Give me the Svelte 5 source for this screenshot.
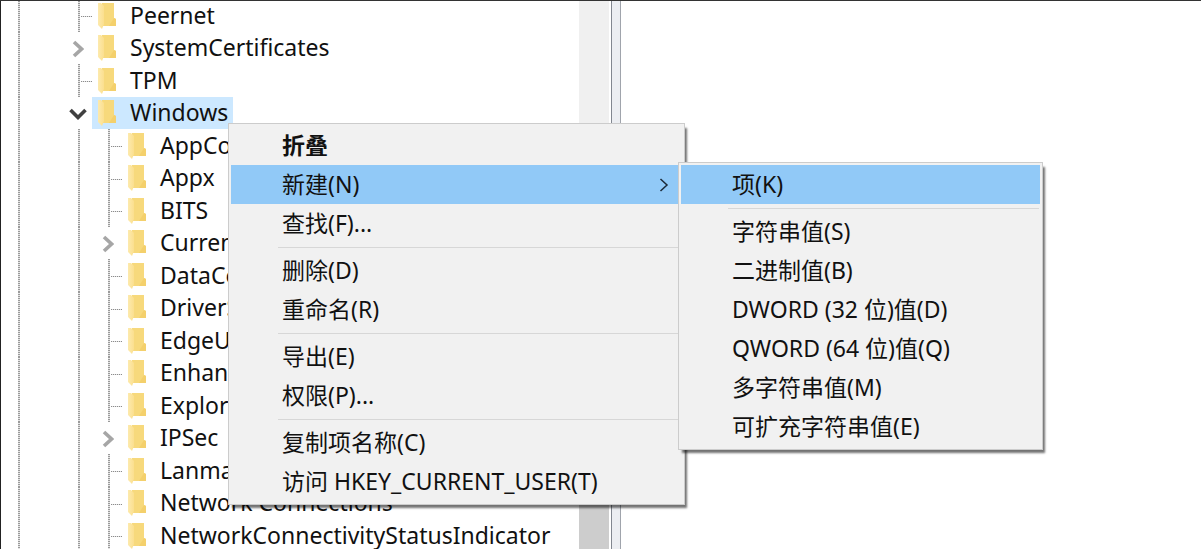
<script>
  const tree = [
    { name: 'Peernet', level: 1 },
    { name: 'SystemCertificates', level: 1, state: 'closed' },
    { name: 'TPM', level: 1 },
    { name: 'Windows', level: 1, state: 'open', selected: true },
    { name: 'AppCo', level: 2 },
    { name: 'Appx', level: 2 },
    { name: 'BITS', level: 2 },
    { name: 'Curren', level: 2, state: 'closed' },
    { name: 'DataCo', level: 2 },
    { name: 'DriverS', level: 2 },
    { name: 'EdgeU', level: 2 },
    { name: 'Enhan', level: 2 },
    { name: 'Explor', level: 2 },
    { name: 'IPSec', level: 2, state: 'closed' },
    { name: 'Lanma', level: 2 },
    { name: 'Network Connections', level: 2 },
    { name: 'NetworkConnectivityStatusIndicator', level: 2 },
  ];

  const submenu = [
    ['项(K)'],
    ['字符串值(S)', '二进制值(B)', 'DWORD (32 位)值(D)', 'QWORD (64 位)值(Q)', '多字符串值(M)', '可扩充字符串值(E)'],
  ];

  const menu = [
    [{ text: '折叠', bold: true }, { text: '新建(N)', children: submenu }, { text: '查找(F)...' }],
    [{ text: '删除(D)' }, { text: '重命名(R)' }],
    [{ text: '导出(E)' }, { text: '权限(P)...' }],
    [{ text: '复制项名称(C)' }, { text: '访问 HKEY_CURRENT_USER(T)' }],
  ];
</script>

<main class="editor">
  <section class="tree-pane">
    <ul class="tree">
      {#each tree as node}
        <li class="row">
          <span class="cell rail"></span>
          <span class="cell"></span>
          {#if node.level === 2}<span class="cell rail"></span>{/if}
          {#if node.state === 'closed'}
            <span class="cell">
              <svg width="12" height="18" viewBox="0 0 12 18"><path d="M2 2 L9.500 9 L2 16" fill="none" stroke="#a6a6a6" stroke-width="3.6" /></svg>
            </span>
          {:else if node.state === 'open'}
            <span class="cell">
              <svg width="18" height="12" viewBox="0 0 18 12"><path d="M1.500 2 L9 9.500 L16.500 2" fill="none" stroke="#404040" stroke-width="3.6" /></svg>
            </span>
          {:else}
            <span class="cell rail branch"></span>
          {/if}
          <button class="node" class:selected={node.selected}>
            <svg class="folder" width="20" height="28" viewBox="0 0 20 28">
              <defs>
                <linearGradient id="leaf" x1="0" y1="0" x2="1" y2="0">
                  <stop offset="0" stop-color="#fdeaae" />
                  <stop offset="1" stop-color="#fbdf8e" />
                </linearGradient>
              </defs>
              <path d="M5 2 H17 V17 L19 18 V25 H5 Z" fill="#f7d97c" />
              <path d="M17 17 L19 18 V25 H12 Z" fill="#f4d06c" />
              <path d="M1 2 H4 L7 5 V23 L5 28 L1 24 Z" fill="url(#leaf)" />
            </svg>
            {node.name}
          </button>
        </li>
      {/each}
    </ul>
    <div class="scrollbar"><div class="thumb"></div></div>
  </section>
  <div class="splitter"></div>
  <section class="values"></section>

  <ul class="menu context">
    {#each menu as group, g}
      {#if g > 0}<li class="separator"></li>{/if}
      {#each group as item}
        <li class="entry">
          <button class="item" class:bold={item.bold} class:active={item.children}>
            {item.text}
            {#if item.children}
              <svg width="10" height="14" viewBox="0 0 10 14"><path d="M1.500 1 L8 7 L1.500 13" fill="none" stroke="#1c2a38" stroke-width="1.5" /></svg>
            {/if}
          </button>
          {#if item.children}
            <ul class="menu sub">
              {#each item.children as subgroup, s}
                {#if s > 0}<li class="separator"></li>{/if}
                {#each subgroup as label}
                  <li><button class="item" class:active={s === 0}>{label}</button></li>
                {/each}
              {/each}
            </ul>
          {/if}
        </li>
      {/each}
    {/each}
  </ul>
</main>

<style>
  :global(body) {
    background: #fff;
  }
  .editor {
    position: relative;
    box-sizing: border-box;
    display: grid;
    grid-template-columns: 611px 10px 1fr;
    height: 100vh;
    overflow: hidden;
    border-top: 1px solid #333;
    color: #111;
    font-family: 'Noto Sans', 'Noto Sans CJK SC', sans-serif;
    font-size: 23px;
  }
  ul {
    list-style: none;
    margin: 0;
    padding: 0;
  }
  button {
    border: 0;
    background: none;
    color: inherit;
    font: inherit;
    text-align: left;
    white-space: nowrap;
  }
  .tree-pane {
    display: flex;
    min-height: 0;
    border-left: 1px solid #222;
  }
  .tree {
    flex: 1;
    min-width: 0;
    margin-top: -2px;
    padding-left: 1px;
  }
  .row {
    display: flex;
    height: 33px;
  }
  .row:nth-child(even) {
    height: 32px;
  }
  .cell {
    flex: none;
    display: flex;
    align-items: center;
    justify-content: center;
    box-sizing: border-box;
    width: 30px;
    padding: 2px 0 0 2px;
  }
  .rail {
    background-image: repeating-linear-gradient(#9a9a9a 0 1px, #e4e4e4 1px 2px);
    background-repeat: no-repeat;
    background-position: 16px 0;
    background-size: 2px 100%;
  }
  .branch {
    background-image:
      repeating-linear-gradient(#9a9a9a 0 1px, #e4e4e4 1px 2px),
      repeating-linear-gradient(90deg, #8c8c8c 0 1px, #e4e4e4 1px 2px);
    background-position: 16px 0, 19px 17px;
    background-size: 2px 100%, 11px 1px;
  }
  .node {
    display: flex;
    align-items: center;
    gap: 13px;
    padding: 0 5px 2px;
  }
  .folder {
    flex: none;
  }
  .selected {
    background: #cce8ff;
  }
  .scrollbar {
    display: flex;
    flex-direction: column;
    justify-content: flex-end;
    width: 30px;
    margin-right: 2px;
    background: #f0f0f0;
  }
  .thumb {
    height: 40%;
    background: #cdcdcd;
  }
  .splitter {
    border-left: 1px solid #828790;
    border-right: 1px solid #a0a4ac;
    background: #eceef2;
  }
  .menu {
    position: absolute;
    box-sizing: border-box;
    padding: 2px 2px 3px;
    border: 1px solid #ccc;
    background: #f1f1f1;
    box-shadow: 3px 4px 2px -1px rgba(0, 0, 0, 0.55);
  }
  .context {
    top: 122px;
    left: 228px;
    min-width: 457px;
  }
  .sub {
    top: -3px;
    left: calc(100% - 4px);
    min-width: 365px;
  }
  .entry {
    position: relative;
  }
  .item {
    display: flex;
    align-items: center;
    justify-content: space-between;
    width: 100%;
    height: 39px;
    padding: 0 13px 4px 51px;
  }
  .item svg {
    margin-top: 4px;
  }
  .bold {
    font-weight: 700;
  }
  .active {
    background: #91c9f7;
  }
  .separator {
    height: 1px;
    margin: 4px 1px 3px 47px;
    background: #d7d7d7;
  }
</style>
